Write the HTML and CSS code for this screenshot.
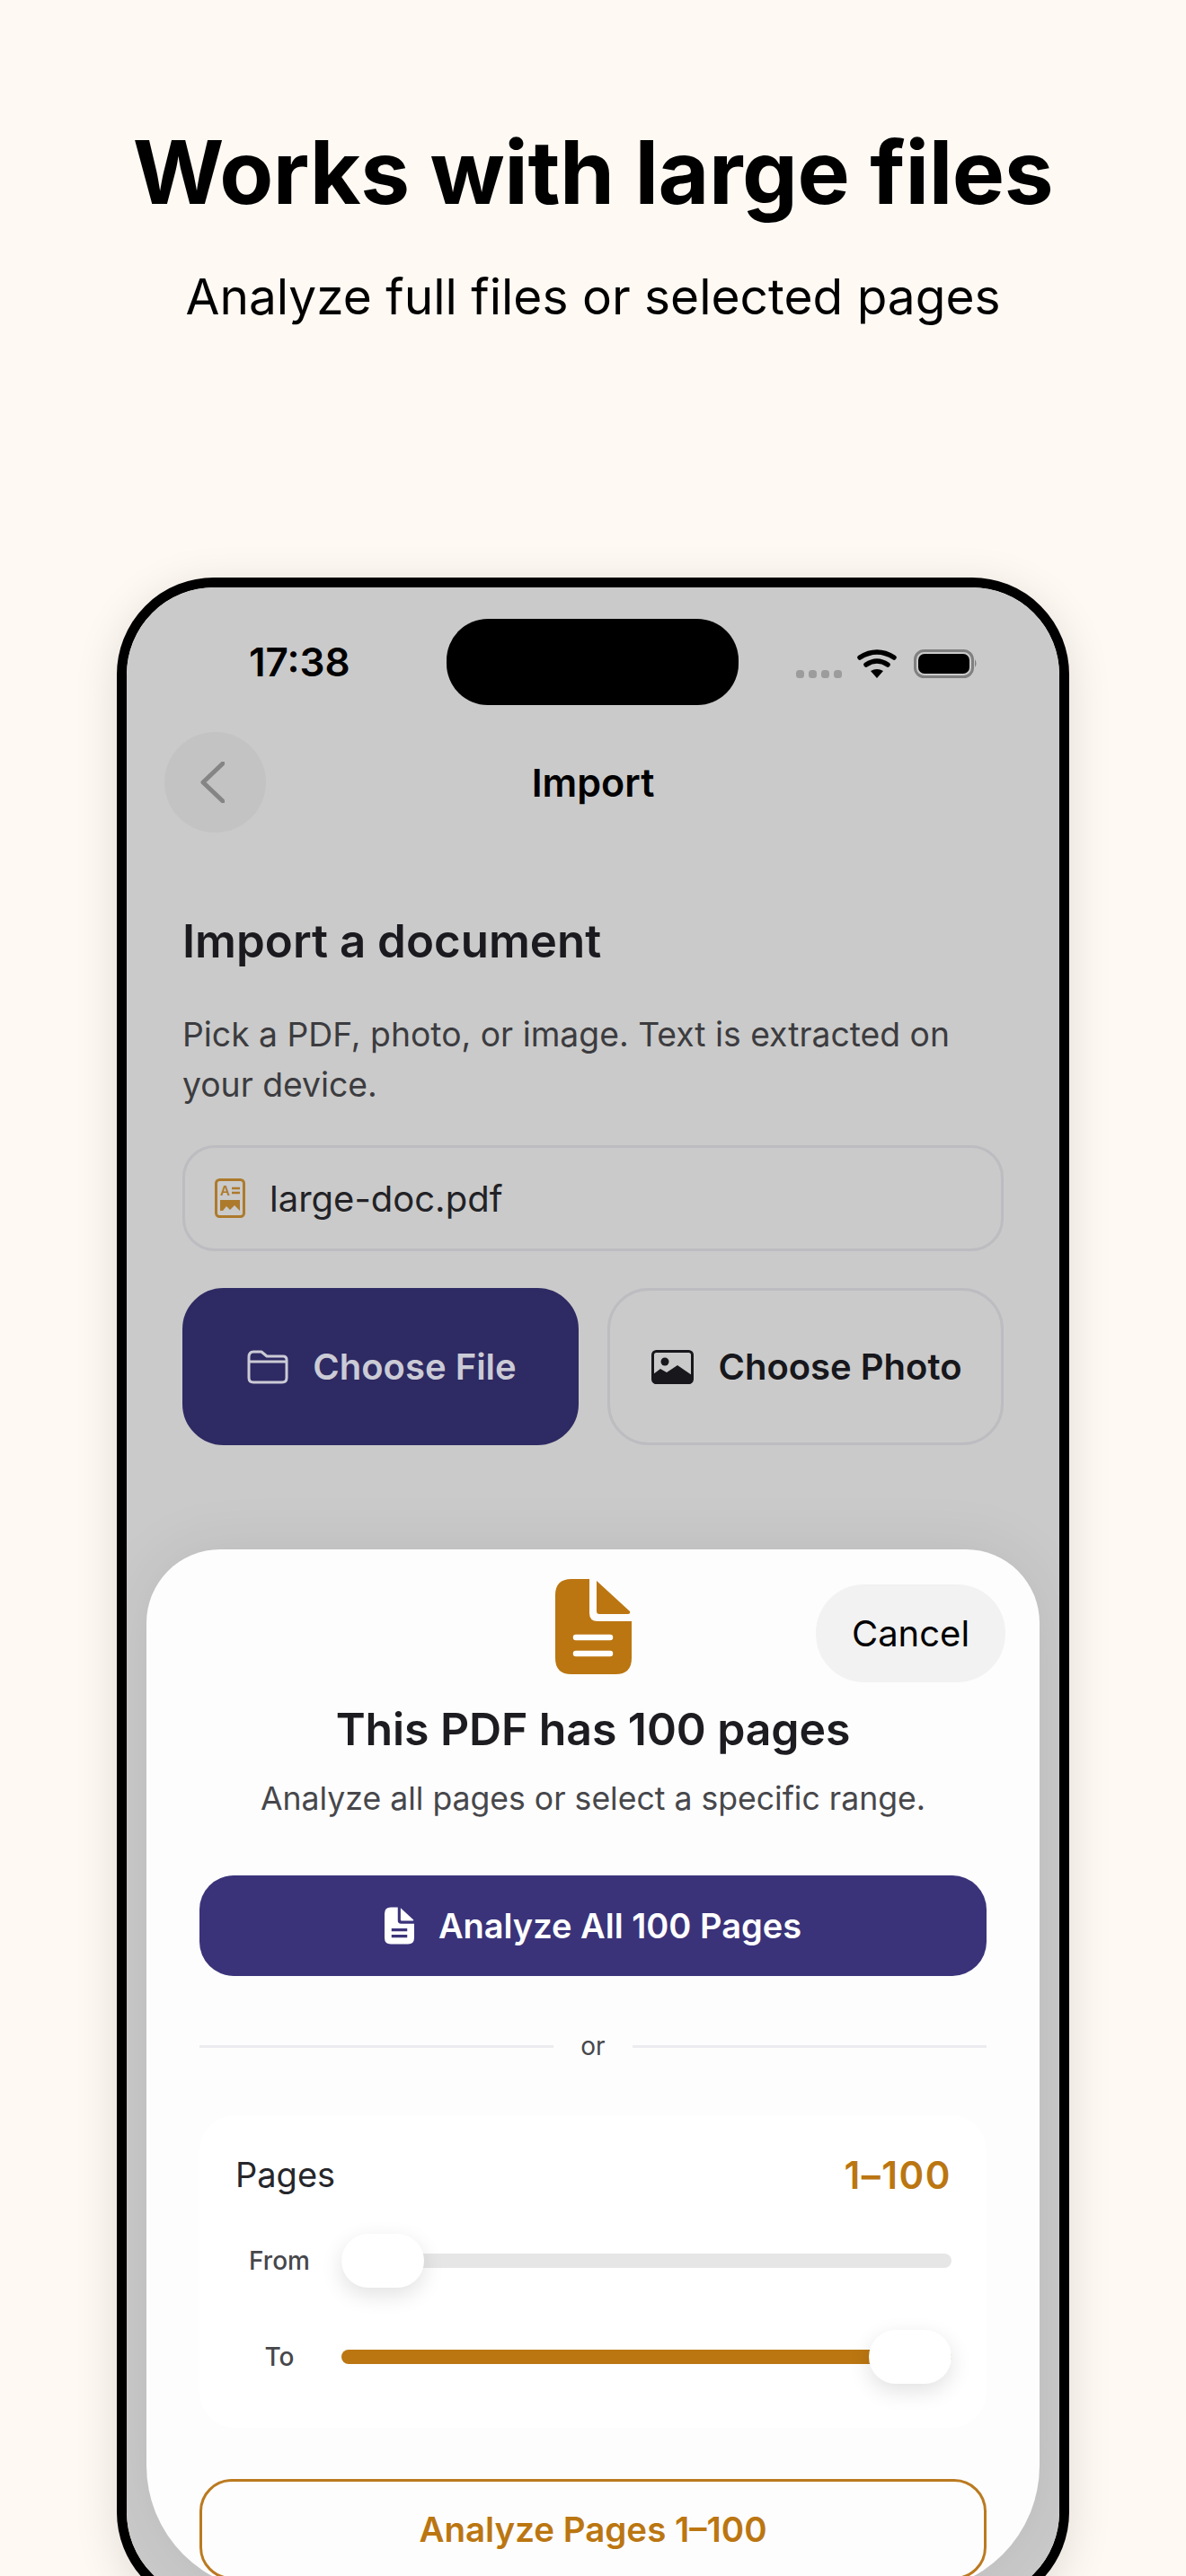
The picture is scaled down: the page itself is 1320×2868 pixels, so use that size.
FILE: index.html
```html
<!DOCTYPE html>
<html lang="en">
<head>
<meta charset="utf-8">
<title>Works with large files</title>
<link rel="stylesheet" href="styles.css">
</head>
<body>
<main class="page">
  <h1 class="headline">Works with large files</h1>
  <p class="tagline">Analyze full files or selected pages</p>
  <div class="phone">
    <div class="screen">
      <div class="status">
        <span class="time">17:38</span>
        <span class="island"></span>
        <svg class="status-icons" width="202" height="32" viewBox="0 0 202 32">
          <g fill="#9c9c9c"><rect x="0" y="23" width="9" height="9" rx="3.5"/><rect x="14" y="23" width="9" height="9" rx="3.5"/><rect x="28" y="23" width="9" height="9" rx="3.5"/><rect x="42" y="23" width="9" height="9" rx="3.5"/></g>
          <g fill="none" stroke="#000" stroke-width="5.5" stroke-linecap="round"><path d="M71 9Q90 -3 109 9"/><path d="M78 17Q90 9 102 17"/></g>
          <path d="M83 24Q90 20 97 24L90 32Z" fill="#000"/>
          <rect x="132.500" y="1.500" width="64" height="29" rx="10" fill="none" stroke="#808080" stroke-width="3"/>
          <rect x="136" y="5" width="57" height="22" rx="7" fill="#000"/>
          <path d="M199 11Q202 15.500 199 20Z" fill="#808080"/>
        </svg>
      </div>
      <nav class="nav">
        <span class="back"><svg width="27" height="46" viewBox="0 0 27 46"><path d="M25 2L3 23L25 44" fill="none" stroke="#858585" stroke-width="5" stroke-linecap="round" stroke-linejoin="round"/></svg></span>
        <span class="nav-title">Import</span>
      </nav>
      <section class="content">
        <h2 class="section-title">Import a document</h2>
        <p class="section-text">Pick a PDF, photo, or image. Text is extracted on your device.</p>
        <div class="file-field">
          <svg width="34" height="44" viewBox="0 0 34 44">
            <rect x="1.500" y="1.500" width="31" height="41" rx="4" fill="none" stroke="#ad7a2c" stroke-width="3"/>
            <text x="6" y="19" class="glyph-a">A</text>
            <path d="M19 11H28M19 16H28" stroke="#ad7a2c" stroke-width="2.500"/>
            <path d="M6 36V24H28V36L22 30L17 35L13 31L9 36Z" fill="#ad7a2c"/>
          </svg>
          <span>large-doc.pdf</span>
        </div>
        <div class="choosers">
          <div class="chooser chooser-primary">
            <svg width="46" height="38" viewBox="0 0 46 38"><g fill="none" stroke="#cbcbd6" stroke-width="3" stroke-linejoin="round"><path d="M2 8Q2 2 7 2H16L22 7H40Q44 7 44 11V31Q44 36 39 36H7Q2 36 2 31Z"/><path d="M2 13H44"/></g></svg>
            <span>Choose File</span>
          </div>
          <div class="chooser">
            <svg width="47" height="38" viewBox="0 0 47 38"><rect x="1.500" y="1.500" width="44" height="35" rx="4" fill="none" stroke="#17171c" stroke-width="3"/><circle cx="15" cy="13" r="4.500" fill="#17171c"/><path d="M2 33V27L10 21L17 25L29 17L45 28V33Q45 38 41 38H6Q2 38 2 33Z" fill="#17171c"/></svg>
            <span>Choose Photo</span>
          </div>
        </div>
      </section>
      <div class="sheet">
        <button class="cancel" type="button">Cancel</button>
        <svg class="sheet-icon" width="85" height="106" viewBox="0 0 85 106">
          <path d="M18 0H38V38Q38 47 47 47H85V88Q85 106 67 106H18Q0 106 0 88V18Q0 0 18 0Z" fill="#bb7611"/>
          <path d="M46 2L83 36Q84 39 81 39H49Q46 39 46 36Z" fill="#bb7611"/>
          <path d="M23 65H61M23 83H61" stroke="#fff" stroke-width="6.500" stroke-linecap="round"/>
        </svg>
        <h3 class="sheet-title">This PDF has 100 pages</h3>
        <p class="sheet-text">Analyze all pages or select a specific range.</p>
        <button class="analyze-all" type="button">
          <svg width="33" height="42" viewBox="0 0 85 106">
            <path d="M18 0H38V38Q38 47 47 47H85V88Q85 106 67 106H18Q0 106 0 88V18Q0 0 18 0Z" fill="#fff"/>
            <path d="M46 2L83 36Q84 39 81 39H49Q46 39 46 36Z" fill="#fff"/>
            <path d="M20 65H65M20 83H65" stroke="#3a337a" stroke-width="8"/>
          </svg>
          <span>Analyze All 100 Pages</span>
        </button>
        <div class="or-row"><span class="or-line"></span><span class="or-text">or</span><span class="or-line"></span></div>
        <div class="range-card">
          <div class="range-head"><span>Pages</span><span class="range-value">1–100</span></div>
          <div class="slider-row">
            <span class="slider-label">From</span>
            <div class="slider"><span class="track"></span><span class="thumb thumb-start"></span></div>
          </div>
          <div class="slider-row slider-row-to">
            <span class="slider-label">To</span>
            <div class="slider"><span class="track track-filled"></span><span class="thumb thumb-end"></span></div>
          </div>
        </div>
        <button class="analyze-range" type="button">Analyze Pages 1–100</button>
      </div>
    </div>
  </div>
</main>
</body>
</html>
```

FILE: styles.css
```css
* { box-sizing: border-box; }

html, body {
  margin: 0;
  padding: 0;
  height: 2868px;
  overflow: hidden;
  background: #fff9f3;
}

body {
  font-family: "Inter", "Liberation Sans", sans-serif;
  color: #000;
}

h1, h2, h3, p { margin: 0; }

button {
  font-family: inherit;
  border: 0;
  padding: 0;
}

.page {
  height: 2868px;
  overflow: hidden;
  padding-top: 132px;
  display: flex;
  flex-direction: column;
  align-items: center;
}

.headline {
  font-size: 98px;
  line-height: 120px;
  font-weight: 700;
  letter-spacing: -0.45px;
  text-align: center;
}

.tagline {
  margin-top: 42px;
  font-size: 55px;
  line-height: 72px;
  font-weight: 400;
  text-align: center;
}

.phone {
  flex: none;
  margin-top: 277px;
  width: 1060px;
  height: 2262px;
  border: 11px solid #000;
  border-radius: 108px;
  box-shadow: 0 10px 50px rgba(0, 0, 0, 0.12);
  overflow: hidden;
}

.screen {
  position: relative;
  height: 100%;
  background: #cacaca;
  border-radius: 97px;
  overflow: hidden;
}

.status {
  display: flex;
  align-items: center;
  padding: 35px 0 0 136px;
}

.time {
  width: 220px;
  font-size: 44px;
  line-height: 96px;
  font-weight: 600;
}

.island {
  width: 325px;
  height: 96px;
  background: #000;
  border-radius: 46px;
}

.status-icons {
  margin-left: 64px;
  margin-top: 4px;
}

.nav {
  display: grid;
  grid-template-columns: 113px 1fr 113px;
  align-items: center;
  margin-top: 30px;
  padding: 0 42px;
}

.back {
  width: 113px;
  height: 112px;
  border-radius: 50%;
  background: #c3c3c3;
  display: flex;
  align-items: center;
  justify-content: center;
  padding-right: 6px;
}

.nav-title {
  text-align: center;
  font-size: 43px;
  line-height: 56px;
  font-weight: 600;
}

.content {
  padding: 89px 62px 0;
}

.section-title {
  font-size: 51px;
  line-height: 64px;
  font-weight: 600;
  color: #1a1a1f;
}

.section-text {
  margin-top: 44px;
  font-size: 37.300px;
  line-height: 56px;
  color: #3c3c40;
}

.file-field {
  margin-top: 39px;
  height: 118px;
  border: 3px solid #bcbcc1;
  border-radius: 36px;
  display: flex;
  align-items: center;
  gap: 27px;
  padding-left: 33px;
  font-size: 40px;
  color: #222226;
}

.glyph-a {
  font-family: "Inter", "Liberation Sans", sans-serif;
  font-size: 15px;
  font-weight: 600;
  fill: #ad7a2c;
}

.choosers {
  margin-top: 41px;
  display: grid;
  grid-template-columns: 441px 441px;
  justify-content: space-between;
}

.chooser {
  height: 175px;
  border: 3px solid #bcbcc1;
  border-radius: 46px;
  display: flex;
  align-items: center;
  justify-content: center;
  gap: 27px;
  padding-left: 3px;
  font-size: 40px;
  font-weight: 600;
  color: #17171c;
}

.chooser-primary {
  background: #2e2a63;
  border-color: #2e2a63;
  color: #cbcbd6;
}

.sheet {
  position: absolute;
  left: 22px;
  right: 22px;
  top: 1071px;
  bottom: 9px;
  background: #fdfdfd;
  border-radius: 82px 82px 140px 140px;
  box-shadow: 0 0 70px rgba(0, 0, 0, 0.08);
  padding: 33px 59px 0;
  display: flex;
  flex-direction: column;
  align-items: stretch;
}

.cancel {
  position: absolute;
  top: 39px;
  right: 38px;
  width: 211px;
  height: 109px;
  border-radius: 54px;
  background: #f2f2f2;
  font-size: 40px;
  color: #000;
}

.sheet-icon {
  display: block;
  align-self: center;
  flex: none;
}

.sheet-title {
  margin-top: 31px;
  text-align: center;
  font-size: 50px;
  line-height: 60px;
  font-weight: 600;
  letter-spacing: -0.1px;
  color: #1c1c21;
}

.sheet-text {
  margin-top: 24px;
  text-align: center;
  font-size: 35.600px;
  line-height: 48px;
  color: #47474b;
}

.analyze-all {
  flex: none;
  margin-top: 61px;
  height: 112px;
  border-radius: 38px;
  background: #3a337a;
  color: #fff;
  font-size: 38px;
  font-weight: 600;
  display: flex;
  align-items: center;
  justify-content: center;
  gap: 27px;
}

.or-row {
  flex: none;
  margin-top: 60px;
  height: 36px;
  display: flex;
  align-items: center;
  gap: 30px;
}

.or-line {
  flex: 1;
  height: 3px;
  background: #ececf0;
}

.or-text {
  font-size: 28px;
  color: #47474b;
}

.range-card {
  flex: none;
  margin-top: 59px;
  height: 348px;
  padding: 41px 39px 0 40px;
  background: #fff;
  border-radius: 40px;
}

.range-head {
  display: flex;
  justify-content: space-between;
  align-items: center;
  height: 50px;
  font-size: 38px;
  color: #26262b;
}

.range-value {
  color: #bb7611;
  font-size: 42px;
  font-weight: 600;
  letter-spacing: 1.500px;
}

.slider-row {
  margin-top: 41px;
  display: flex;
  align-items: center;
}

.slider-row-to { margin-top: 47px; }

.slider-label {
  flex: none;
  width: 98px;
  text-align: center;
  font-size: 28px;
  font-weight: 500;
  color: #47474b;
}

.slider {
  position: relative;
  flex: 1;
  margin-left: 20px;
  height: 60px;
  display: flex;
  align-items: center;
}

.track {
  width: 100%;
  height: 16px;
  border-radius: 8px;
  background: #e6e6e6;
}

.track-filled { background: #bb7611; }

.thumb {
  position: absolute;
  top: 0;
  width: 92px;
  height: 60px;
  border-radius: 30px;
  background: #fff;
  box-shadow: 0 8px 24px rgba(0, 0, 0, 0.12);
}

.thumb-start { left: 0; }
.thumb-end { right: 0; }

.analyze-range {
  flex: none;
  margin-top: 57px;
  height: 112px;
  border: 3px solid #bb7a20;
  border-radius: 36px;
  background: transparent;
  color: #bb7611;
  font-size: 38.500px;
  font-weight: 600;
}
```
